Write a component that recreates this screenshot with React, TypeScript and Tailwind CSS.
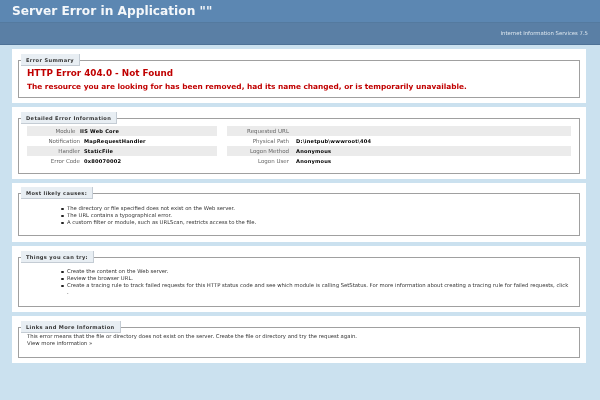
import type { ReactNode } from "react"

const font = "font-['DejaVu_Sans',Verdana,sans-serif]"

function Panel({ title, className, boxClass, children }: { title: string; className: string; boxClass: string; children: ReactNode }) {
  return (
    <div className={`bg-white px-[6px] ${className}`}>
      <fieldset className={`border border-[#a0a0a0] min-w-0 ${boxClass}`}>
        <legend className="ml-[2px] h-[12px] bg-[#e8eef3] border-r border-b border-[#c4ccd4] pl-[5px] pr-[5px] text-[5.1px] leading-[12px] font-bold tracking-[0.35px] text-[#333]">
          {title}
        </legend>
        {children}
      </fieldset>
    </div>
  )
}

function Row({ label, value, labelClass, gapClass, shaded }: { label: string; value?: string; labelClass: string; gapClass: string; shaded?: boolean }) {
  return (
    <div className={`flex h-[10px] items-center pt-[1px] ${shaded ? "bg-[#ebebeb]" : ""}`}>
      <div className={`${labelClass} text-right text-[5.5px] text-[#666] shrink-0`}>{label}</div>
      {value && <div className={`${gapClass} font-bold text-[5.1px] text-black tracking-[0.2px]`}>{value}</div>}
    </div>
  )
}

function Bullet({ children }: { children: ReactNode }) {
  return (
    <li className="flex">
      <span className="mt-[2.5px] mr-[3.5px] h-[2.5px] w-[2.5px] shrink-0 rounded-full bg-[#222]" />
      <span>{children}</span>
    </li>
  )
}

export default function App() {
  return (
    <div className={`${font} w-[600px] h-[400px] overflow-hidden bg-[#cbe1ef] blur-[0.3px]`}>
      <div className="h-[22px] bg-[#5c87b2] pl-[12px] text-[12.2px] font-bold leading-[23px] text-[#f4f7fa]">
        Server Error in Application ""
      </div>
      <div className="h-[23px] bg-[#5a7fa5] border-t border-b border-t-[#547a9f] border-b-[#4d7196] pr-[12px] text-right text-[5.3px] leading-[20px] text-[#dfe8f0]">
        Internet Information Services 7.5
      </div>

      <div className="mt-[4px] ml-[12px] w-[574px] flex flex-col gap-[4px] text-[5.3px]">
        <Panel title="Error Summary" className="h-[54px] pt-[5px]" boxClass="h-[44px]">
          <div className="pl-[8px] text-[#c00000] font-bold">
            <h2 className="text-[8.8px] leading-[14px]">HTTP Error 404.0 - Not Found</h2>
            <h3 className="mt-[1px] text-[7.36px] leading-[12px]">
              The resource you are looking for has been removed, had its name changed, or is temporarily unavailable.
            </h3>
          </div>
        </Panel>

        <Panel title="Detailed Error Information" className="h-[72px] pt-[5px]" boxClass="h-[62px]">
          <div className="flex gap-[10px] pl-[8px] pr-[8px] pt-[2px]">
            <div className="w-[190px]">
              <Row label="Module" value="IIS Web Core" labelClass="w-[48.5px]" gapClass="ml-[4.5px]" shaded />
              <Row label="Notification" value="MapRequestHandler" labelClass="w-[53px]" gapClass="ml-[4px]" />
              <Row label="Handler" value="StaticFile" labelClass="w-[53px]" gapClass="ml-[4px]" shaded />
              <Row label="Error Code" value="0x80070002" labelClass="w-[53px]" gapClass="ml-[4px]" />
            </div>
            <div className="flex-1">
              <Row label="Requested URL" labelClass="w-[62px]" gapClass="ml-[7px]" shaded />
              <Row label="Physical Path" value="D:\inetpub\wwwroot\404" labelClass="w-[62px]" gapClass="ml-[7px]" />
              <Row label="Logon Method" value="Anonymous" labelClass="w-[62px]" gapClass="ml-[7px]" shaded />
              <Row label="Logon User" value="Anonymous" labelClass="w-[62px]" gapClass="ml-[7px]" />
            </div>
          </div>
        </Panel>

        <Panel title="Most likely causes:" className="h-[59px] pt-[4px]" boxClass="h-[49px]">
          <ul className="pl-[42px] pt-[6px] leading-[7px] text-[#333]">
            <Bullet>The directory or file specified does not exist on the Web server.</Bullet>
            <Bullet>The URL contains a typographical error.</Bullet>
            <Bullet>A custom filter or module, such as URLScan, restricts access to the file.</Bullet>
          </ul>
        </Panel>

        <Panel title="Things you can try:" className="h-[66px] pt-[5px]" boxClass="h-[56px]">
          <ul className="pl-[42px] pt-[5px] leading-[7px] text-[#333]">
            <Bullet>Create the content on the Web server.</Bullet>
            <Bullet>Review the browser URL.</Bullet>
            <Bullet>
              Create a tracing rule to track failed requests for this HTTP status code and see which module is calling SetStatus. For more information about creating a tracing rule for failed requests, click
              <br />.
            </Bullet>
          </ul>
        </Panel>

        <Panel title="Links and More Information" className="h-[47px] pt-[5px]" boxClass="h-[37px]">
          <div className="pl-[8px] leading-[7px] text-[#333]">
            <p>This error means that the file or directory does not exist on the server. Create the file or directory and try the request again.</p>
            <p>View more information »</p>
          </div>
        </Panel>
      </div>
    </div>
  )
}
